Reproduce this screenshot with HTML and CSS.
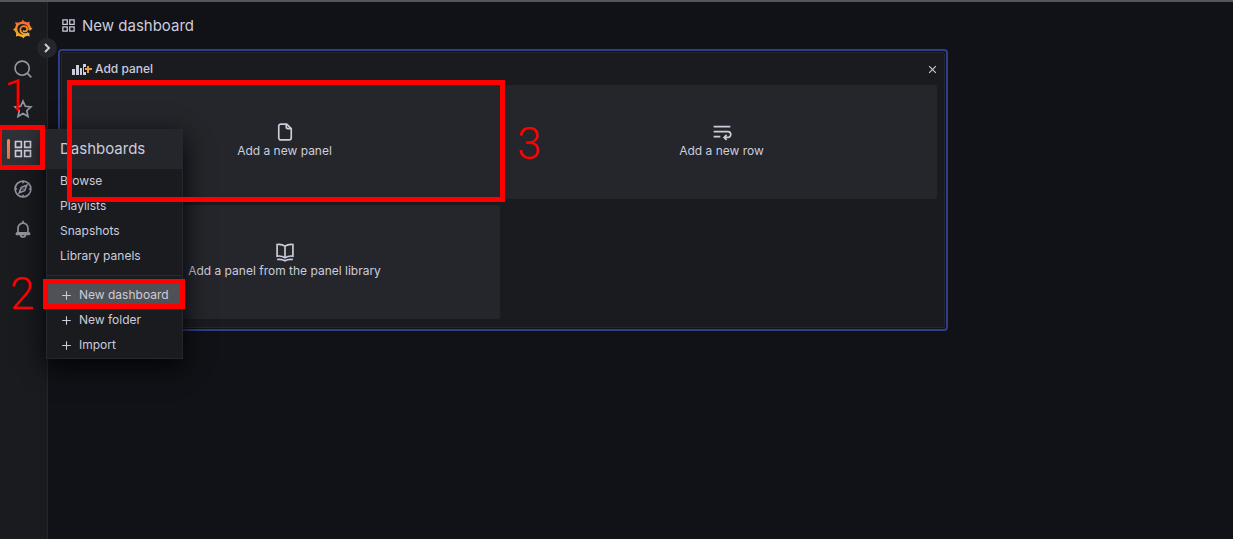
FILE: index.html
```
<!DOCTYPE html>
<html lang="en">

<head>
    <meta charset="UTF-8">
    <meta name="viewport" content="width=device-width, initial-scale=1.0">
    <title>New dashboard - Grafana</title>
    <link rel="stylesheet" href="styles.css">
</head>

<body>
    <svg class="sprite" aria-hidden="true">
        <symbol id="icon-apps" viewBox="0 0 24 24">
            <path d="M3 3h7v7H3zM14 3h7v7h-7zM3 14h7v7H3zM14 14h7v7h-7z" />
        </symbol>
        <symbol id="icon-plus" viewBox="0 0 24 24">
            <path d="M12 4v16M4 12h16" />
        </symbol>
    </svg>

    <div class="app">
        <nav class="sidebar" aria-label="Main menu">
            <a class="sidebar-item" href="#" aria-label="Home">
                <svg class="logo" viewBox="0 0 24 24" aria-hidden="true">
                    <defs>
                        <linearGradient id="logo-gradient" gradientUnits="userSpaceOnUse" x1="0" y1="1" x2="0" y2="23">
                            <stop offset="0" stop-color="#ee5f35" />
                            <stop offset="1" stop-color="#f5c02c" />
                        </linearGradient>
                    </defs>
                    <path class="logo-teeth" d="M10 4l1.500-3.500L14.500 4zM16 4.500l4-1.500-.5 4.500zM20 9l3.500 2.500L20 14zM4 8.500L2.500 4l5 .5zM3.500 10L0 12.500 3.500 15.500zM4 16.500L3.500 21l5-1.500zM10 20l2.500 3.500L15 19.500zM16 19.500l4 1.500-.5-4.500z" />
                    <path class="logo-ring" d="M20 13.500C21 8 17 4.500 12 4.500S3.700 8 3.700 12.300 7.500 20 12 20c3 0 5.300-1.200 6.500-3" />
                    <path class="logo-spiral" d="M18.500 16.800c-4.500 2.800-9.700.2-9.700-4 0-2.500 2-4.300 4.200-4.300 2.400 0 4 1.700 4 3.500s-1.300 2.900-2.900 2.900c-1 0-1.700-.5-2-1.300" />
                </svg>
            </a>
            <a class="sidebar-item" href="#" aria-label="Search dashboards">
                <svg class="icon" viewBox="0 0 24 24" aria-hidden="true">
                    <circle cx="11" cy="11" r="8.500" />
                    <path d="M17 17l5 5" />
                </svg>
            </a>
            <a class="sidebar-item" href="#" aria-label="Starred">
                <svg class="icon" viewBox="0 0 24 24" aria-hidden="true">
                    <path d="M12 2.500l2.800 6.200 6.700.7-5 4.600 1.500 7-6-3.500L6 21l1.500-7-5-4.600 6.700-.7z" />
                </svg>
            </a>
            <div class="sidebar-group">
                <a class="sidebar-item active" href="#" aria-label="Dashboards">
                    <svg class="icon" aria-hidden="true"><use href="#icon-apps" /></svg>
                </a>
                <div class="flyout">
                    <a class="flyout-title" href="#">Dashboards</a>
                    <ul class="flyout-list">
                        <li><a href="#">Browse</a></li>
                        <li><a href="#">Playlists</a></li>
                        <li><a href="#">Snapshots</a></li>
                        <li><a href="#">Library panels</a></li>
                    </ul>
                    <ul class="flyout-list flyout-actions">
                        <li><a class="selected" href="#"><svg class="icon-small" aria-hidden="true"><use href="#icon-plus" /></svg>New dashboard</a></li>
                        <li><a href="#"><svg class="icon-small" aria-hidden="true"><use href="#icon-plus" /></svg>New folder</a></li>
                        <li><a href="#"><svg class="icon-small" aria-hidden="true"><use href="#icon-plus" /></svg>Import</a></li>
                    </ul>
                </div>
            </div>
            <a class="sidebar-item" href="#" aria-label="Explore">
                <svg class="icon" viewBox="0 0 24 24" aria-hidden="true">
                    <circle cx="12" cy="12" r="9.500" />
                    <path d="M16.500 7.500l-2.500 6.500-6.500 2.500L10 10zM12 2.500v2.500M12 19v2.500M2.500 12H5M19 12h2.500M12 11.500v1" />
                </svg>
            </a>
            <a class="sidebar-item" href="#" aria-label="Alerting">
                <svg class="icon" viewBox="0 0 24 24" aria-hidden="true">
                    <path d="M12 2v3M6 17v-6a6 6 0 0 1 12 0v6M5 18.500c-1.500 0-1.500-2 1-2h12c2.500 0 2.500 2 1 2zM9 19c.5 3.500 5.500 3.500 6 0" />
                </svg>
            </a>
            <button class="sidebar-toggle" type="button" aria-label="Expand menu">
                <svg viewBox="0 0 16 16" aria-hidden="true"><path d="M6 4l4 4-4 4" /></svg>
            </button>
        </nav>

        <main class="content">
            <header class="page-header">
                <svg class="icon-title" aria-hidden="true"><use href="#icon-apps" /></svg>
                <h1>New dashboard</h1>
            </header>

            <section class="add-panel">
                <div class="add-panel-inner">
                    <div class="add-panel-header">
                        <svg class="panel-icon" viewBox="0 0 20 12" aria-hidden="true">
                            <path class="bars" d="M0 6h3v6H0zM4 2h3v10H4zM8 5h2v7H8zM11 1h3v3h-2v5h2v3h-3z" />
                            <path class="plus" d="M15 3h2v2h3v2h-3v3h-2V7h-2V5h2z" />
                        </svg>
                        <h2>Add panel</h2>
                        <button class="close-button" type="button" aria-label="Close">
                            <svg viewBox="0 0 16 16" aria-hidden="true"><path d="M2 2l12 12M14 2L2 14" /></svg>
                        </button>
                    </div>
                    <div class="card-grid">
                        <button class="card" type="button">
                            <svg class="icon" viewBox="0 0 24 24" aria-hidden="true">
                                <path d="M14 2.500H7A2.500 2.500 0 0 0 4.500 5v14A2.500 2.500 0 0 0 7 21.500h10a2.500 2.500 0 0 0 2.500-2.500V8zM13.500 2.500V6a2 2 0 0 0 2 2h4" />
                            </svg>
                            Add a new panel
                        </button>
                        <button class="card" type="button">
                            <svg class="icon" viewBox="0 0 24 24" aria-hidden="true">
                                <path d="M2 5.500h20M2 11.500h17a3.500 3.500 0 0 1 0 7h-4M2 17.500h8M17.500 15.500l-3 3 3 3" />
                            </svg>
                            Add a new row
                        </button>
                        <button class="card" type="button">
                            <svg class="icon" viewBox="0 0 24 24" aria-hidden="true">
                                <path d="M12 5C9 3 5.500 2.500 2.500 3v14c3-.5 6.500 0 9.500 2 3-2 6.500-2.500 9.500-2V3c-3-.5-6.500 0-9.500 2zM12 5v13M2.500 21c3.500-.5 7 0 9.500 1.500 2.500-1.500 6-2 9.500-1.500" />
                            </svg>
                            Add a panel from the panel library
                        </button>
                    </div>
                </div>
            </section>
        </main>
    </div>

    <!-- Numbered steps over the page -->
    <div class="mark mark-menu"></div>
    <div class="mark mark-dashboard"></div>
    <div class="mark mark-panel"></div>
    <span class="step step-one">1</span>
    <span class="step step-two">2</span>
    <span class="step step-three">3</span>
</body>

</html>
```
FILE: styles.css
```
* {
    box-sizing: border-box;
}

body {
    margin: 0;
    background-color: #111217;
    color: #ccccdc;
    font-family: Inter, "Liberation Sans", sans-serif;
    font-size: 12px;
    line-height: 18px;
}

a {
    color: inherit;
    text-decoration: none;
}

button {
    font: inherit;
    color: inherit;
    border: none;
    cursor: pointer;
}

svg {
    display: block;
    flex: none;
    fill: none;
    stroke: currentColor;
    stroke-width: 2;
}

.sprite {
    position: absolute;
    width: 0;
    height: 0;
}

.app {
    display: flex;
    min-height: 100vh;
    border-top: 2px solid #55565a;
}

/* Sidebar */
.sidebar {
    position: relative;
    z-index: 1;
    flex: none;
    width: 48px;
    padding-top: 7px;
    background-color: #1a1b1f;
    border-right: 1px solid #26272c;
}

.sidebar-item {
    display: flex;
    align-items: center;
    justify-content: center;
    height: 40px;
    padding-right: 1px;
    color: #9595a2;
}

.sidebar-group {
    position: relative;
}

.sidebar-item.active {
    background-color: #303136;
    color: #ccccdc;
}

.sidebar-item.active::before {
    content: "";
    position: absolute;
    left: 7px;
    top: 10px;
    width: 3px;
    height: 20px;
    border-radius: 2px;
    background: linear-gradient(#f08a4b, #e56a4a);
}

.icon {
    width: 20px;
    height: 20px;
}

.logo {
    width: 20px;
    height: 20px;
}

.logo-teeth {
    fill: url(#logo-gradient);
    stroke: none;
}

.logo-ring {
    stroke: url(#logo-gradient);
    stroke-width: 3;
}

.logo-spiral {
    stroke: url(#logo-gradient);
    stroke-width: 2;
}

.sidebar-toggle {
    position: absolute;
    top: 36px;
    right: -10px;
    display: flex;
    align-items: center;
    justify-content: center;
    width: 20px;
    height: 20px;
    padding: 0;
    border-radius: 50%;
    background-color: #25262b;
}

.sidebar-toggle svg {
    width: 16px;
    height: 16px;
}

/* Dashboards menu */
.flyout {
    position: absolute;
    top: 0;
    left: 46px;
    width: 137px;
    z-index: 2;
    background-color: #1a1b1f;
    border: 1px solid #26272c;
    box-shadow: 0 8px 24px #010409;
}

.flyout-title {
    display: block;
    padding: 10px 13px 11px;
    background-color: #25262b;
    font-size: 15px;
}

.flyout-list {
    margin: 0;
    padding: 0 0 6px;
    list-style: none;
}

.flyout-list a {
    display: flex;
    align-items: center;
    height: 25px;
    padding: 0 13px 1px;
    white-space: nowrap;
}

.flyout-actions {
    padding: 7px 0 0;
    border-top: 1px solid #2a2b30;
}

.flyout-actions a {
    gap: 6px;
}

.flyout-actions .selected {
    background-color: #505156;
}

.icon-small {
    width: 13px;
    height: 13px;
}

/* Page */
.content {
    flex: 1;
    min-width: 0;
    padding: 0 10px;
}

.page-header {
    display: flex;
    align-items: center;
    gap: 6px;
    height: 47px;
    padding-left: 3px;
}

.page-header h1 {
    margin: 0;
    font-size: 15px;
    font-weight: 400;
}

.icon-title {
    width: 15px;
    height: 15px;
}

.add-panel {
    width: 76.4%;
    padding: 1px;
    border: 2px solid #2f3f85;
    border-radius: 4px;
}

.add-panel-inner {
    padding: 0 7px 8px;
    background-color: #1a1b1f;
    border: 1px solid #26272c;
    border-radius: 2px;
}

.add-panel-header {
    display: flex;
    align-items: center;
    gap: 3px;
    height: 32px;
    padding-left: 3px;
}

.add-panel-header h2 {
    margin: 0;
    font-size: 12px;
    font-weight: 500;
}

.panel-icon {
    width: 20px;
    height: 12px;
    stroke: none;
}

.panel-icon .bars {
    fill: #ccccdc;
}

.panel-icon .plus {
    fill: #eb9a3c;
}

.close-button {
    margin-left: auto;
    padding: 0;
    background: none;
}

.close-button svg {
    width: 9px;
    height: 9px;
}

.card-grid {
    display: grid;
    grid-template-columns: 1fr 1fr;
    gap: 6px;
}

.card {
    display: flex;
    flex-direction: column;
    align-items: center;
    justify-content: center;
    min-height: 114px;
    padding: 0 0 2px;
    border-radius: 2px;
    background-color: #25262b;
}

.card .icon {
    width: 20px;
    height: 20px;
}

/* Step marks */
.mark {
    position: absolute;
    z-index: 3;
    border: 5px solid #ff0000;
    pointer-events: none;
}

.mark-menu {
    left: -3px;
    top: 125px;
    width: 48px;
    height: 45px;
}

.mark-dashboard {
    left: 43px;
    top: 279px;
    width: 142px;
    height: 30px;
}

.mark-panel {
    left: 67px;
    top: 80px;
    width: 438px;
    height: 122px;
}

.step {
    position: absolute;
    z-index: 3;
    color: #ff0000;
    font-family: Roboto, sans-serif;
    font-size: 44px;
    font-weight: 300;
    line-height: 44px;
}

.step-one {
    left: 4px;
    top: 74px;
}

.step-two {
    left: 10px;
    top: 272px;
}

.step-three {
    left: 517px;
    top: 122px;
}
```
